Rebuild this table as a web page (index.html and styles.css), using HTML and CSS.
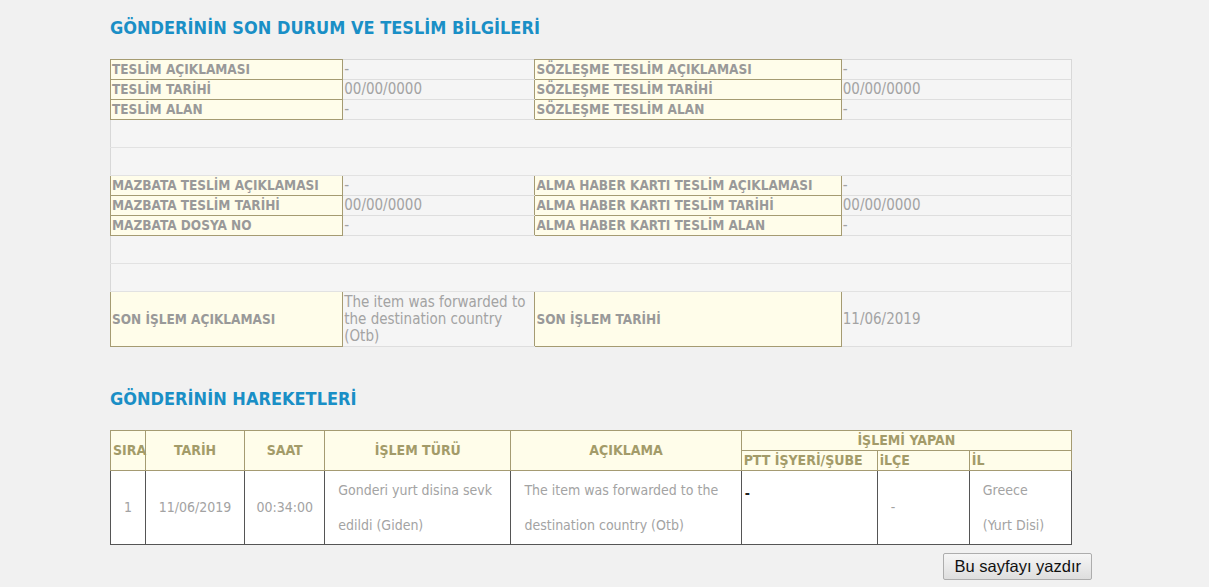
FILE: index.html
```html
<!DOCTYPE html>
<html lang="tr">
<head>
  <meta charset="UTF-8" />
  <title>Gönderi Takip</title>
  <link rel="stylesheet" href="styles.css">
</head>
<body>
  <div class="page">
    <h2 class="title">GÖNDERİNİN SON DURUM VE TESLİM BİLGİLERİ</h2>

    <table class="info">
      <colgroup>
        <col style="width:232px"><col style="width:192px"><col style="width:306px"><col style="width:230px">
      </colgroup>
      <tr><th>TESLİM AÇIKLAMASI</th><td>-</td><th>SÖZLEŞME TESLİM AÇIKLAMASI</th><td>-</td></tr>
      <tr><th>TESLİM TARİHİ</th><td>00/00/0000</td><th>SÖZLEŞME TESLİM TARİHİ</th><td>00/00/0000</td></tr>
      <tr><th>TESLİM ALAN</th><td>-</td><th>SÖZLEŞME TESLİM ALAN</th><td>-</td></tr>
      <tr class="gap"><td colspan="4"></td></tr>
      <tr class="gap"><td colspan="4"></td></tr>
      <tr><th>MAZBATA TESLİM AÇIKLAMASI</th><td>-</td><th>ALMA HABER KARTI TESLİM AÇIKLAMASI</th><td>-</td></tr>
      <tr><th>MAZBATA TESLİM TARİHİ</th><td>00/00/0000</td><th>ALMA HABER KARTI TESLİM TARİHİ</th><td>00/00/0000</td></tr>
      <tr><th>MAZBATA DOSYA NO</th><td>-</td><th>ALMA HABER KARTI TESLİM ALAN</th><td>-</td></tr>
      <tr class="gap"><td colspan="4"></td></tr>
      <tr class="gap"><td colspan="4"></td></tr>
      <tr class="last">
        <th>SON İŞLEM AÇIKLAMASI</th>
        <td>The item was forwarded to the destination country (Otb)</td>
        <th>SON İŞLEM TARİHİ</th>
        <td>11/06/2019</td>
      </tr>
    </table>

    <h2 class="title title-moves">GÖNDERİNİN HAREKETLERİ</h2>

    <table class="moves">
      <colgroup>
        <col style="width:35px"><col style="width:99px"><col style="width:80px"><col style="width:186px">
        <col style="width:230px"><col style="width:136px"><col style="width:92px"><col style="width:102px">
      </colgroup>
      <tr>
        <th rowspan="2">SIRA</th>
        <th rowspan="2">TARİH</th>
        <th rowspan="2">SAAT</th>
        <th rowspan="2">İŞLEM TÜRÜ</th>
        <th rowspan="2">AÇIKLAMA</th>
        <th colspan="3">İŞLEMİ YAPAN</th>
      </tr>
      <tr>
        <th class="sub">PTT İŞYERİ/ŞUBE</th>
        <th class="sub">iLÇE</th>
        <th class="sub">İL</th>
      </tr>
      <tr class="row">
        <td class="center">1</td>
        <td class="center">11/06/2019</td>
        <td class="center">00:34:00</td>
        <td class="text">Gonderi yurt disina sevk<br>edildi (Giden)</td>
        <td class="text">The item was forwarded to the<br>destination country (Otb)</td>
        <td class="top"><b>-</b></td>
        <td class="text">-</td>
        <td class="text">Greece<br>(Yurt Disi)</td>
      </tr>
    </table>

    <div class="actions">
      <button class="print-btn">Bu sayfayı yazdır</button>
    </div>
  </div>
</body>
</html>
```

FILE: styles.css
```css
body {
  margin: 0;
  background: #f1f1f1;
  font-family: "DejaVu Sans", Verdana, sans-serif;
  font-stretch: condensed;
  color: #999;
}

.page {
  width: 962px;
  margin-left: 110px;
  padding-top: 16px;
}

.title {
  margin: 0 0 19px 0;
  font-size: 18px;
  line-height: 24px;
  font-weight: bold;
  color: #1a8fc6;
}

.title-moves {
  margin-top: 40px;
}

/* teslim bilgileri */
.info {
  width: 962px;
  table-layout: fixed;
  border-collapse: collapse;
  border: 1px solid #d8d8d8;
  background: #f5f5f5;
  font-size: 15px;
}

.info th,
.info td {
  height: 19px;
  padding: 0 1px;
  text-align: left;
  vertical-align: middle;
  line-height: 17px;
}

.info th {
  background: #fffdea;
  border: 1px solid #a59b72;
  color: #999;
  font-weight: bold;
  font-size: 13.5px;
}

.info td {
  border-bottom: 1px solid #dedede;
  color: #a3a3a3;
}

.info .gap td {
  height: 27px;
  border-bottom: 1px solid #e2e2e2;
}

.info .last th,
.info .last td {
  height: 54px;
}

/* hareketler */
.moves {
  width: 962px;
  table-layout: fixed;
  border-collapse: collapse;
  font-size: 14px;
}

.moves th {
  height: 19px;
  padding: 0 2px;
  background: #fffdea;
  border: 1px solid #a59b72;
  color: #a39b69;
  font-weight: bold;
  line-height: 17px;
  text-align: center;
}

.moves th.sub {
  text-align: left;
}

.moves .row {
  height: 74px;
}

.moves .row td {
  background: #fff;
  border: 1px solid #555;
  color: #a3a3a3;
  line-height: 35px;
  vertical-align: middle;
}

.moves td.center {
  text-align: center;
}

.moves td.text {
  padding: 0 4px 0 13px;
}

.moves td.top {
  vertical-align: top;
  padding: 12px 4px 0 3px;
  line-height: 20px;
  color: #222;
}

.actions {
  display: flex;
  justify-content: flex-end;
  margin-right: -20px;
  padding-top: 8px;
}

.print-btn {
  font-family: "Liberation Sans", Arial, sans-serif;
  font-size: 16.5px;
  padding: 2px 10px;
  height: 27px;
  color: #111;
  background: linear-gradient(to bottom, #f6f6f6, #dedede);
  border: 1px solid #adadad;
  border-radius: 2px;
}
```
